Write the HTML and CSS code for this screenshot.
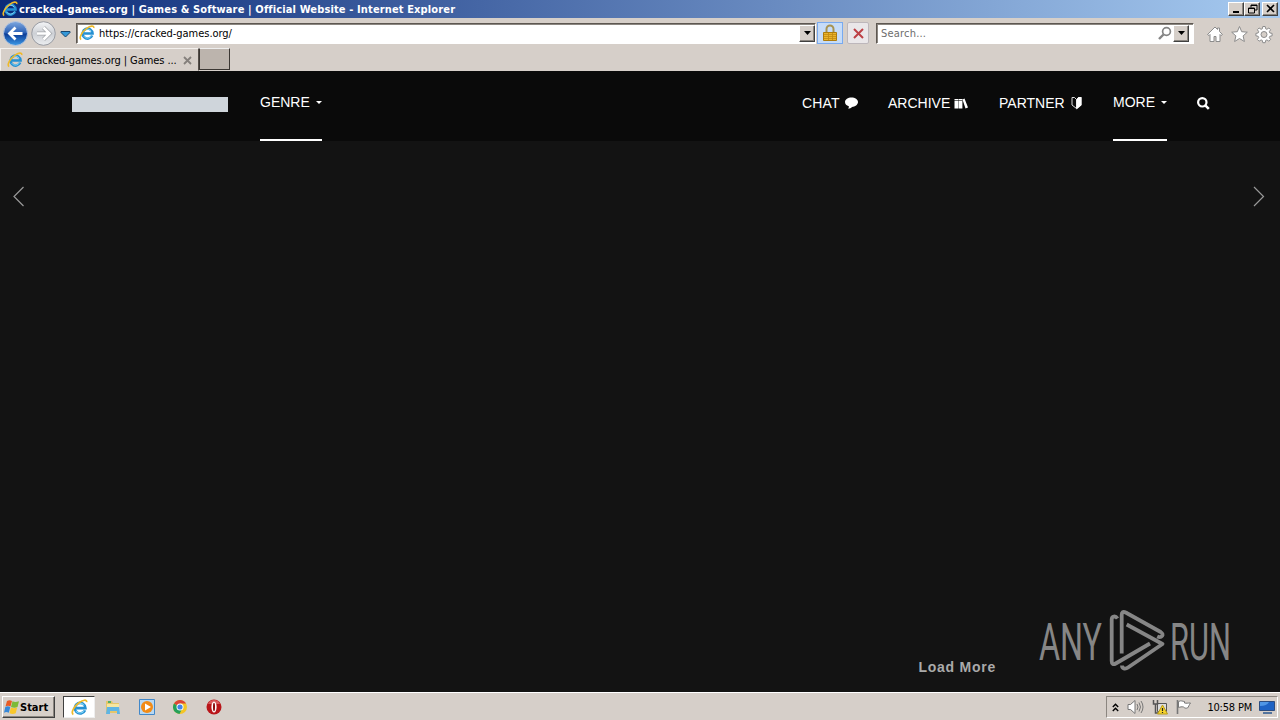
FILE: index.html
```html
<!DOCTYPE html>
<html lang="en">
<head>
  <meta charset="UTF-8">
  <title>cracked-games.org | Games &amp; Software | Official Website</title>
  <link rel="stylesheet" href="styles.css">
</head>
<body>

  <!-- Shared icons -->
  <svg class="defs" width="0" height="0">
    <symbol id="ie" viewBox="0 0 16 16">
      <path d="M13.2 10.6A5 5 0 1 1 13.6 8.6H5" fill="none" stroke="#2590d2" stroke-width="2.500"/>
      <path d="M12.6 10.5A4.5 4.5 0 0 1 4.6 11M4.500 7.200a4.300 4.300 0 0 1 7.800-1" fill="none" stroke="#7dd2f5" stroke-width="1"/>
      <path d="M2.200 14.500C-.5 13 3 6.600 7.800 3.300 11 1 15.200 0 14.700 3" fill="none" stroke="#efb928" stroke-width="1.600"/>
    </symbol>
    <symbol id="down" viewBox="0 0 7 4"><path d="M0 0h7L3.5 4z" fill="#000"/></symbol>
  </svg>

  <div class="title-bar">
    <svg class="title-icon" width="16" height="16"><use href="#ie"/></svg>
    <span class="title-text">cracked-games.org | Games &amp; Software | Official Website - Internet Explorer</span>
    <div class="window-buttons">
      <button><svg width="13" height="10"><path d="M3 8h6" stroke="#000" stroke-width="2"/></svg></button>
      <button><svg width="13" height="10"><path d="M5 3.5V1h6v5H9M5 1.5h6M2.5 4v5h6V4zM2 4.5h7" fill="none" stroke="#000"/></svg></button>
      <button class="close"><svg width="13" height="10"><path d="M3 1l7 7M10 1L3 8" stroke="#000" stroke-width="1.6"/></svg></button>
    </div>
  </div>

  <div class="address-row">
    <svg class="history" width="76" height="30" viewBox="0 0 76 30">
      <defs>
        <linearGradient id="blue" x2="0" y2="1"><stop offset="0" stop-color="#7fa9e0"/><stop offset=".48" stop-color="#2a5fb5"/><stop offset=".52" stop-color="#0c3c96"/><stop offset="1" stop-color="#3e9be8"/></linearGradient>
        <linearGradient id="grey" x2="0" y2="1"><stop offset="0" stop-color="#f4f5f7"/><stop offset=".5" stop-color="#cdd0d5"/><stop offset="1" stop-color="#eceef0"/></linearGradient>
      </defs>
      <circle cx="15.500" cy="15.500" r="12" fill="url(#blue)" stroke="#b9c6dc"/>
      <circle cx="43.500" cy="15.500" r="11.800" fill="url(#grey)" stroke="#999ca3"/>
      <path d="M22.500 15.500H10M15.500 9.500l-6 6 6 6" fill="none" stroke="#fff" stroke-width="2.800"/>
      <path d="M37 15.500h12M43.500 9.500l6 6-6 6" fill="none" stroke="#a3a6aa" stroke-width="4"/>
      <path d="M37 15.500h12M43.500 9.500l6 6-6 6" fill="none" stroke="#fff" stroke-width="2.600"/>
      <path d="M61 13.500h9v1l-4.500 4.500-4.500-4.500z" fill="#3498d8" stroke="#17466f"/>
    </svg>
    <div class="field address">
      <svg width="16" height="16"><use href="#ie"/></svg>
      <span class="url">https://cracked-games.org/</span>
      <button class="drop"><svg width="7" height="4"><use href="#down"/></svg></button>
    </div>
    <div class="tool lock">
      <svg width="16" height="18" viewBox="0 0 16 18"><path d="M4.500 9V5a3.500 3.500 0 0 1 7 0v4" fill="none" stroke="#a79352" stroke-width="2"/><path d="M1.500 8.500h13v8h-13z" fill="#eab52d" stroke="#ad7c0d"/><path d="M2 10.500h12M2 12.500h12M2 14.500h12M6.500 9v7M10.500 9v7" stroke="#c18a13" stroke-width=".8"/></svg>
    </div>
    <div class="tool stop">
      <svg width="13" height="13"><path d="M2 2l9 9M11 2L2 11" stroke="#bd4045" stroke-width="2"/></svg>
    </div>
    <div class="field search">
      <span class="hint">Search...</span>
      <svg width="15" height="15" viewBox="0 0 15 15" fill="none" stroke="#858585"><circle cx="9.500" cy="5.500" r="3.900" stroke-width="1.700"/><path d="M6.500 8.500L2 13" stroke-width="2.400"/></svg>
      <button class="drop"><svg width="7" height="4"><use href="#down"/></svg></button>
    </div>
    <svg class="ie-tools" width="68" height="20" viewBox="0 0 68 20" fill="#fff" stroke="#8c8c8c">
      <path d="M1.500 10.500L9 3l2.500 2.500V4h2v3.500l3 3-1.500 1-1-1v7h-4v-5H8v5H4v-7l-1 1z"/>
      <path d="M33.500 2.500l2.200 5.200 5.600.5-4.200 3.700 1.300 5.600-4.900-3-4.900 3 1.300-5.600-4.200-3.700 5.600-.5z"/>
      <path d="M56.800 2.500h2.400l.5 2.300 1.200.5 2-1.300 1.700 1.700-1.300 2 .5 1.200 2.300.5v2.400l-2.300.5-.5 1.200 1.300 2-1.700 1.700-2-1.300-1.200.5-.5 2.300h-2.400l-.5-2.300-1.200-.5-2 1.300-1.700-1.700 1.300-2-.5-1.200-2.300-.5V9.400l2.300-.5.5-1.200-1.300-2L53.100 4l2 1.300 1.200-.5z"/>
      <circle cx="58" cy="10.500" r="3" fill="#d6cfc9"/>
    </svg>
  </div>

  <div class="tab-row">
    <div class="tab">
      <svg width="16" height="16"><use href="#ie"/></svg>
      <span class="tab-title">cracked-games.org | Games ...</span>
      <svg class="tab-close" width="9" height="9"><path d="M1 1l7 7M8 1L1 8" stroke="#85807c" stroke-width="1.800"/></svg>
    </div>
    <div class="new-tab"></div>
  </div>

  <main class="page">
    <nav class="navbar">
      <div class="brand"></div>
      <a class="dropdown genre">GENRE <i class="caret"></i></a>
      <div class="nav-right">
        <a class="chat">CHAT
          <svg width="13" height="12" viewBox="0 0 13 12"><path d="M6.500.5C10 .5 13 2.400 13 5s-3 4.900-6 4.900C6 11 4.500 11.600 3 11.500c.8-.6 1-1.400.8-2.200C1.500 8.600 0 7 0 5 0 2.400 3 .5 6.500.5z"/></svg>
        </a>
        <a class="archive">ARCHIVE
          <svg width="14" height="11" viewBox="0 0 14 11"><path d="M.5 1h3.700v9.500H.5zM4.600 1h3.800v9.500H4.600zM8.500 1.400L10.500.5l3.500 9-2.500 1z"/><path d="M0 2.500h8.500" stroke="#0a0a0a" stroke-width=".6"/></svg>
        </a>
        <a class="partner">PARTNER
          <svg width="12" height="14" viewBox="0 0 12 14"><path d="M1 1.500h2.500l2 2v9L1 9zM5.500 3.500l2-2H10V9l-4.500 3.500" fill="none" stroke="#ddd"/><path d="M5.500 3.500L7.500 1h3v8.300L5.500 13.500z"/></svg>
        </a>
        <a class="dropdown more">MORE <i class="caret"></i></a>
        <a class="find"><svg width="13" height="13" viewBox="0 0 13 13" fill="none" stroke="#fff"><circle cx="5.300" cy="5.300" r="4.200" stroke-width="2.200"/><path d="M8.300 8.300l3.500 3.500" stroke-width="2.600"/></svg></a>
      </div>
    </nav>

    <div class="slider">
      <svg width="12" height="22" viewBox="0 0 12 22"><path d="M10.500 2L1 11.500 10.500 21"/></svg>
      <svg width="12" height="22" viewBox="0 0 12 22"><path d="M1 2l9.500 9.500L1 21"/></svg>
    </div>

    <div class="page-bottom">
      <span class="load-more">Load More</span>
      <svg class="watermark" width="196" height="64" viewBox="0 0 196 64">
        <text x="1" y="50.500" textLength="63" lengthAdjust="spacingAndGlyphs">ANY</text>
        <g class="play">
          <path d="M79.500 9.500c-2-3-5.800-2.500-5.800 1V52c0 3 1.500 4 4 2.500L112 34.500"/>
          <path d="M83.700 44.500V6c0-3 1.500-4 4-2.500l35 19.500c4 2.500 1 6.500-3.500 4.500"/>
          <path d="M88.700 15.500L124.500 35 90 58.500c-3 2-6 1-6-2"/>
        </g>
        <text x="132" y="50.500" textLength="61" lengthAdjust="spacingAndGlyphs">RUN</text>
      </svg>
    </div>
  </main>

  <footer class="taskbar">
    <div class="start">
      <svg width="16" height="16" viewBox="0 0 16 16"><path d="M3 2c2-1 3-1 5 0L6.500 7.500c-2-1-3-1-5 0z" fill="#e95b24"/><path d="M8.500 2.300c2 1 3.500 1 6.500 0L13.500 8c-2 1-4 1-6.500 0z" fill="#7dba37"/><path d="M1.300 8c2-1 3-1 5 0L4.800 13.800c-2-1-3-1-4.800 0z" fill="#3788d8"/><path d="M6.900 8.500c2 1 4 1 6.300 0l-1.500 5.800c-2 1-4 1-6.200 0z" fill="#f9c72b"/></svg>
      <span>Start</span>
    </div>
    <div class="task-active"><svg width="17" height="17"><use href="#ie"/></svg></div>
    <div class="launchers">
      <svg width="16" height="16" viewBox="0 0 16 16"><path d="M1 2h6l1 2h6v10H1z" fill="#e5c66a"/><path d="M2 5h12v4H2z" fill="#f6e6a0"/><path d="M3 2h3v2H3z" fill="#55ad65"/><path d="M2 8h12l1 7h-3v-3H5v3H1z" fill="#5fb5e4"/></svg>
      <svg width="16" height="16" viewBox="0 0 16 16"><path d="M.5.500h15v15H.5z" fill="#b8d8f2" stroke="#4288c9"/><circle cx="8" cy="8" r="6" fill="#f28b16"/><path d="M6 4.500l6 3.500-6 3.500z" fill="#fff"/></svg>
      <svg width="14" height="14" viewBox="0 0 14 14"><circle cx="7" cy="7" r="7" fill="#f4c524"/><path d="M7 7L1 3.400A7 7 0 0 1 13 3.500H7z" fill="#dc4437"/><path d="M1 3.400A7 7 0 0 0 6.500 14L9 9z" fill="#25a05a"/><circle cx="7" cy="7" r="3.500" fill="#fff"/><circle cx="7" cy="7" r="2.600" fill="#4285e8"/></svg>
      <svg width="16" height="16" viewBox="0 0 16 16"><circle cx="8" cy="8" r="7.500" fill="#b91519"/><path d="M2 5a6.500 6.500 0 0 1 12 0z" fill="#d9595b"/><ellipse cx="8" cy="8" rx="2.600" ry="5.500" fill="#fff"/><ellipse cx="8" cy="8" rx="1" ry="4.200" fill="#8b080b"/></svg>
    </div>
    <div class="tray">
      <svg width="7" height="9" viewBox="0 0 7 9"><path d="M.8 4l2.700-2.700L6.200 4M.8 8l2.700-2.700L6.200 8" fill="none" stroke="#000" stroke-width="1.400"/></svg>
      <svg width="17" height="16" viewBox="0 0 17 16" fill="#fff" stroke="#777"><path d="M1 5.500h2.500L8 1.500v13l-4.500-4H1z"/><path d="M10 5q2 3 0 6M12 3.500q3 4.500 0 9M14 2q4 6 0 12" fill="none"/></svg>
      <svg width="16" height="16" viewBox="0 0 16 16"><path d="M5.500 4.500h9v8h-9z" fill="#ddd" stroke="#555"/><path d="M1.500 1v4h4V1M3.500 5v9h3" fill="none" stroke="#555" stroke-width="1.500"/><path d="M10.500 6l5 9h-10z" fill="#f7d42c" stroke="#b79a18"/><path d="M10.500 9v3M10.500 13v1" stroke="#222" stroke-width="1.200"/></svg>
      <svg width="16" height="16" viewBox="0 0 16 16" fill="#fff" stroke="#777"><path d="M1.500 1v14" stroke-width="1.600"/><path d="M2.500 2.500c3-1.500 4 0 6 0V4c2 .5 3 0 6 0-1.500 2-2 4-3 5-2 .5-3 0-4-1-2-.5-3 0-5 .5z"/></svg>
      <span class="clock">10:58 PM</span>
      <svg width="16" height="13" viewBox="0 0 16 13"><path d="M.5.500h15v9H.5z" fill="#1e63c4" stroke="#2c4d80"/><path d="M1 5q7 0 9-4H1z" fill="#4f96e5"/><path d="M4 12h9" stroke="#54749d" stroke-width="2"/></svg>
    </div>
  </footer>

</body>
</html>
```

FILE: styles.css
```css
* {
  box-sizing: border-box;
}

body {
  width: 1280px;
  height: 720px;
  margin: 0;
  display: flex;
  flex-direction: column;
  overflow: hidden;
  background: #d6cfc9;
  color: #000;
  font-family: "DejaVu Sans Condensed", "DejaVu Sans", sans-serif;
  font-size: 11px;
}

svg {
  display: block;
  flex: none;
}

.defs {
  position: absolute;
}

button {
  display: flex;
  align-items: center;
  justify-content: center;
  padding: 0;
  background: #d6cfc9;
  border: 1px solid;
  border-color: #fff #404040 #404040 #fff;
  box-shadow: inset -1px -1px #8b8680;
}

/* Window title */
.title-bar {
  display: flex;
  align-items: center;
  height: 18px;
  padding: 0 2px;
  background: linear-gradient(90deg, #0b2a78, #a6caf0);
}

.title-text {
  margin-left: 1px;
  color: #fff;
  font-weight: bold;
  white-space: nowrap;
  letter-spacing: 0.13px;
}

.window-buttons {
  display: flex;
  margin-left: auto;
}

.window-buttons button {
  width: 16px;
  height: 14px;
}

.window-buttons .close {
  margin-left: 2px;
}

/* Address bar */
.address-row {
  display: flex;
  align-items: center;
  height: 30px;
}

.field {
  display: flex;
  align-items: center;
  height: 21px;
  background: #fff;
  border: 1px solid;
  border-color: #5d5751 #fff #fff #5d5751;
  box-shadow: inset 1px 1px #8b8680;
}

.address {
  width: 740px;
  padding-left: 2px;
}

.url {
  flex: 1;
  margin-left: 4px;
  letter-spacing: -0.03px;
}

.drop {
  width: 16px;
  height: 17px;
}

.tool {
  display: flex;
  align-items: center;
  justify-content: center;
  height: 22px;
}

.lock {
  width: 26px;
  margin-left: 1px;
  background: #c6dcf8;
  border: 1px solid #78aaf0;
}

.stop {
  width: 22px;
  margin: 0 7px 0 4px;
  background: #eae7e9;
  border: 1px solid #bdb7bb;
  border-radius: 2px;
}

.search {
  width: 318px;
  padding: 0 4px;
}

.hint {
  flex: 1;
  color: #6d6d6d;
  letter-spacing: 0.2px;
}

.search .drop {
  margin-left: 1px;
}

.ie-tools {
  margin: 2px 0 0 12px;
}

/* Tabs */
.tab-row {
  display: flex;
  height: 23px;
}

.tab {
  display: flex;
  align-items: center;
  width: 199px;
  padding: 1px 6px 0;
  border: 1px solid;
  border-color: #f4f1ee #554f4a transparent #f4f1ee;
}

.tab-title {
  flex: 1;
  margin-left: 4px;
  white-space: nowrap;
  letter-spacing: -0.07px;
}

.new-tab {
  width: 31px;
  height: 22px;
  background: #bcb4ad;
  border: 1px solid;
  border-color: #eee #3b3733 #3b3733 #3b3733;
}

/* Site */
.page {
  display: flex;
  flex-direction: column;
  height: 621px;
  background: #131313;
}

.navbar {
  display: flex;
  height: 70px;
  padding: 0 70px 0 72px;
  background: #0a0a0a;
  color: #fff;
  font: 14px/64px "Liberation Sans", Arial, sans-serif;
}

.brand {
  width: 156px;
  height: 15px;
  margin: 26px 32px 0 0;
  background: #cfd5db;
}

.nav-right {
  display: flex;
  margin-left: auto;
}

.navbar a {
  display: flex;
  align-items: center;
  height: 64px;
  white-space: nowrap;
}

.navbar a svg {
  fill: #fff;
}

.navbar a.find svg {
  fill: none;
}

.navbar .dropdown {
  justify-content: space-between;
  height: 70px;
  padding-bottom: 6px;
  border-bottom: 2px solid #fff;
}

.caret {
  margin-top: 1px;
  border: 3px solid transparent;
  border-top-color: #fff;
  border-bottom: 0;
}

.genre {
  width: 62px;
}

.nav-right a {
  justify-content: space-between;
}

.chat {
  width: 56px;
  margin-right: 30px;
  letter-spacing: 0.2px;
}

.archive {
  width: 80px;
  margin-right: 31px;
}

.partner {
  width: 84px;
  margin-right: 30px;
}

.more {
  width: 54px;
  margin-right: 30px;
}

.slider {
  display: flex;
  justify-content: space-between;
  padding: 44px 15px 0 13px;
}

.slider path {
  fill: none;
  stroke: #999;
  stroke-width: 1.2;
}

.page-bottom {
  display: flex;
  align-items: flex-end;
  justify-content: flex-end;
  margin-top: auto;
  padding: 0 46px 19px 0;
}

.load-more {
  margin: 0 42px -3px 0;
  color: #aaa;
  font: bold 14px/18px "Liberation Sans", Arial, sans-serif;
  letter-spacing: 0.75px;
}

.watermark {
  overflow: visible;
}

.watermark text {
  fill: #868686;
  font: 400 51px Roboto, sans-serif;
}

.play {
  fill: none;
  stroke: #868686;
  stroke-width: 3.8;
  stroke-linejoin: round;
}

/* Taskbar */
.taskbar {
  display: flex;
  align-items: center;
  height: 28px;
  padding: 1px 2px 0;
  border-top: 1px solid #fff;
}

.start {
  display: flex;
  align-items: center;
  width: 53px;
  height: 22px;
  padding-left: 1px;
  border: 1px solid;
  border-color: #fff #404040 #404040 #fff;
  box-shadow: inset -1px -1px #8b8680;
  font-weight: bold;
}

.task-active {
  display: flex;
  align-items: center;
  justify-content: center;
  width: 32px;
  height: 22px;
  margin-left: 8px;
  background: #fff;
  border: 1px solid;
  border-color: #404040 #eee #eee #404040;
}

.launchers {
  display: flex;
  align-items: center;
  gap: 18px;
  margin-left: 10px;
}

.launchers svg:last-child {
  margin-left: 1px;
}

.tray {
  display: flex;
  align-items: center;
  width: 172px;
  height: 22px;
  margin-left: auto;
  padding: 0 2px 0 5px;
  border: 1px solid;
  border-color: #8b8680 #fff #fff #8b8680;
}

.tray svg + svg {
  margin-left: 8px;
}

.clock {
  margin: 0 7px 0 auto;
  white-space: nowrap;
  letter-spacing: -0.2px;
}
```
